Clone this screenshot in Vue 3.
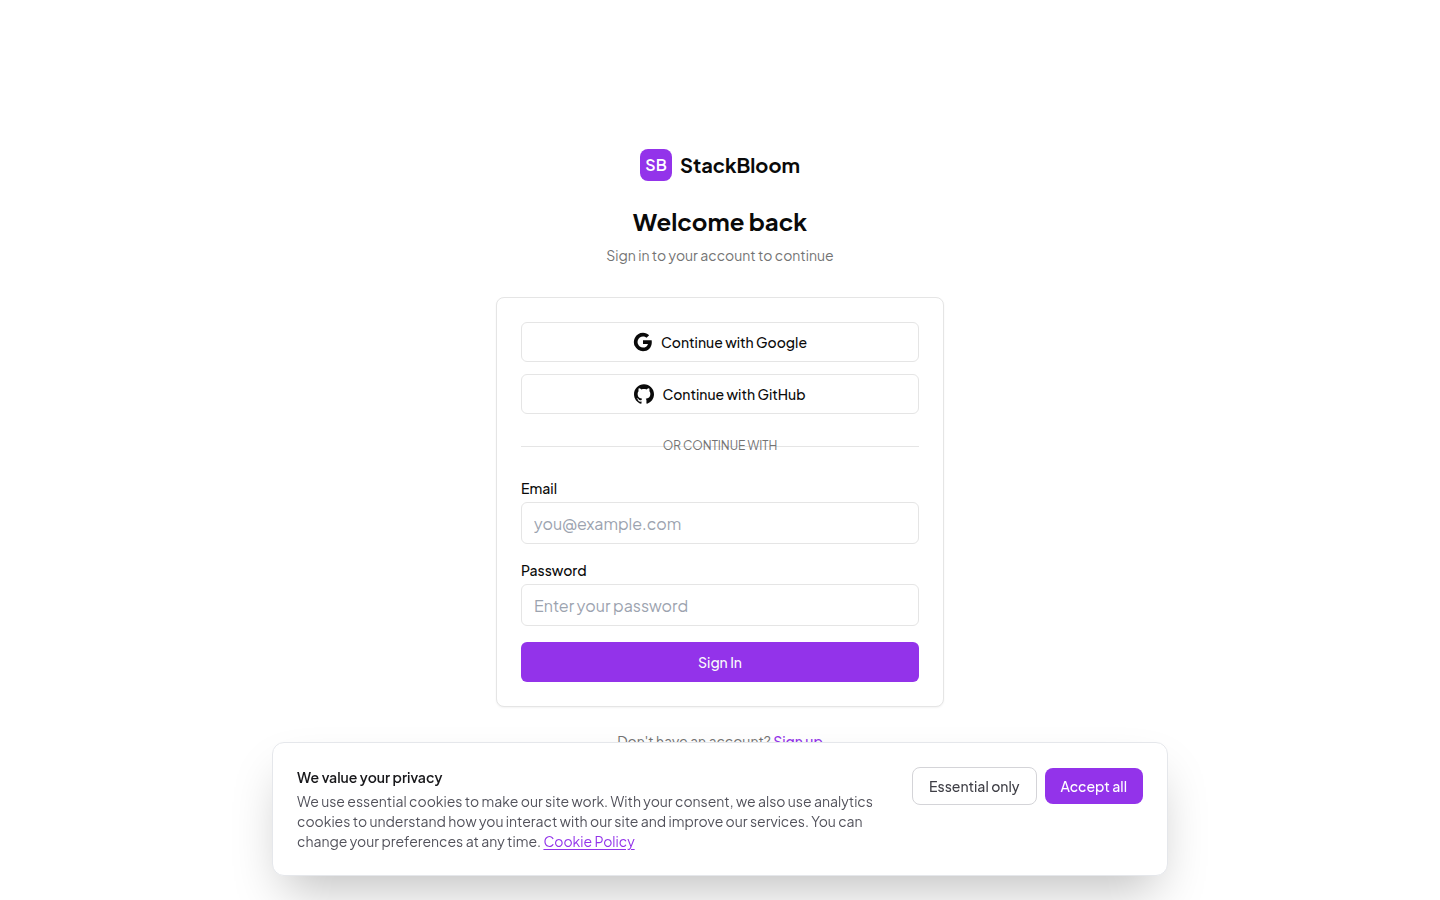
<script setup>
import { ref } from 'vue'

const email = ref('')
const password = ref('')
</script>

<template>
  <div class="page">
    <main class="auth">
      <header class="intro">
        <a class="brand" href="#">
          <span class="mark">SB</span>
          <span class="name">StackBloom</span>
        </a>
        <h1>Welcome back</h1>
        <p>Sign in to your account to continue</p>
      </header>

      <section class="card">
        <div class="providers">
          <button type="button" class="provider">
            <svg viewBox="0 0 24 24" aria-hidden="true">
              <path d="M22.56 12.25c0-.78-.07-1.53-.2-2.25H12v4.26h5.92c-.26 1.37-1.04 2.53-2.21 3.31v2.77h3.57c2.08-1.92 3.28-4.74 3.28-8.09z" />
              <path d="M12 23c2.97 0 5.46-.98 7.28-2.66l-3.57-2.77c-.98.66-2.23 1.06-3.71 1.06-2.86 0-5.29-1.93-6.16-4.53H2.18v2.84C3.99 20.53 7.7 23 12 23z" />
              <path d="M5.84 14.09c-.22-.66-.35-1.36-.35-2.09s.13-1.43.35-2.09V7.07H2.18C1.43 8.55 1 10.22 1 12s.43 3.45 1.18 4.93l2.85-2.22.81-.62z" />
              <path d="M12 5.38c1.62 0 3.06.56 4.21 1.64l3.15-3.15C17.45 2.09 14.97 1 12 1 7.7 1 3.99 3.47 2.18 7.07l3.66 2.84c.87-2.6 3.3-4.53 6.16-4.53z" />
            </svg>
            Continue with Google
          </button>
          <button type="button" class="provider">
            <svg viewBox="0 0 24 24" aria-hidden="true">
              <path d="M12 .297c-6.63 0-12 5.373-12 12 0 5.303 3.438 9.8 8.205 11.385.6.113.82-.258.82-.577 0-.285-.01-1.04-.015-2.04-3.338.724-4.042-1.61-4.042-1.61C4.422 18.07 3.633 17.7 3.633 17.7c-1.087-.744.084-.729.084-.729 1.205.084 1.838 1.236 1.838 1.236 1.07 1.835 2.809 1.305 3.495.998.108-.776.417-1.305.76-1.605-2.665-.3-5.466-1.332-5.466-5.93 0-1.31.465-2.38 1.235-3.22-.135-.303-.54-1.523.105-3.176 0 0 1.005-.322 3.3 1.23.96-.267 1.98-.399 3-.405 1.02.006 2.04.138 3 .405 2.28-1.552 3.285-1.23 3.285-1.23.645 1.653.24 2.873.12 3.176.765.84 1.23 1.91 1.23 3.22 0 4.61-2.805 5.625-5.475 5.92.42.36.81 1.096.81 2.22 0 1.606-.015 2.896-.015 3.286 0 .315.21.69.825.57C20.565 22.092 24 17.592 24 12.297c0-6.627-5.373-12-12-12" />
            </svg>
            Continue with GitHub
          </button>
        </div>

        <div class="divider"><span>OR CONTINUE WITH</span></div>

        <form @submit.prevent>
          <div class="field">
            <label for="email">Email</label>
            <input id="email" v-model="email" type="email" placeholder="you@example.com" />
          </div>
          <div class="field">
            <label for="password">Password</label>
            <input id="password" v-model="password" type="password" placeholder="Enter your password" />
          </div>
          <button type="submit" class="submit">Sign In</button>
        </form>
      </section>

      <p class="signup">Don't have an account? <a href="#">Sign up</a></p>
    </main>

    <aside class="consent" aria-labelledby="consent-title">
      <div class="consent-text">
        <h2 id="consent-title">We value your privacy</h2>
        <p>
          We use essential cookies to make our site work. With your consent, we also use analytics
          cookies to understand how you interact with our site and improve our services. You can
          change your preferences at any time. <a href="#">Cookie Policy</a>
        </p>
      </div>
      <div class="consent-actions">
        <button type="button" class="essential">Essential only</button>
        <button type="button" class="accept">Accept all</button>
      </div>
    </aside>
  </div>
</template>

<style>
body {
  margin: 0;
  background: #fff;
}
</style>

<style scoped>
* {
  box-sizing: border-box;
}

.page {
  min-height: 100vh;
  display: flex;
  align-items: center;
  justify-content: center;
  padding: 16px;
  color: #0a0a0a;
  font-family: "Plus Jakarta Sans", Inter, sans-serif;
  font-size: 14px;
  line-height: 20px;
  -webkit-font-smoothing: antialiased;
}

h1,
h2,
p {
  margin: 0;
}

button,
input {
  font-family: inherit;
}

button {
  font-size: 14px;
  line-height: 20px;
  font-weight: 500;
  cursor: pointer;
}

.auth {
  width: 100%;
  max-width: 448px;
}

.intro {
  display: flex;
  flex-direction: column;
  align-items: center;
  margin-bottom: 32px;
  text-align: center;
}

.brand {
  display: flex;
  align-items: center;
  gap: 8px;
  margin-bottom: 24px;
  color: inherit;
  text-decoration: none;
}

.mark {
  display: flex;
  align-items: center;
  justify-content: center;
  width: 32px;
  height: 32px;
  border-radius: 8px;
  background: #9333ea;
  color: #fff;
  font-size: 16px;
  font-weight: 600;
}

.name {
  font-size: 20px;
  line-height: 28px;
  font-weight: 700;
}

h1 {
  margin-bottom: 8px;
  font-size: 24px;
  line-height: 32px;
  font-weight: 700;
}

.intro p,
.signup {
  color: #737373;
}

.card {
  padding: 24px;
  border: 1px solid #e5e5e5;
  border-radius: 8px;
  background: #fff;
  box-shadow: 0 1px 2px rgba(0, 0, 0, 0.05);
}

.providers {
  display: grid;
  gap: 12px;
}

.provider {
  display: flex;
  align-items: center;
  justify-content: center;
  gap: 8px;
  height: 40px;
  border: 1px solid #e5e5e5;
  border-radius: 6px;
  background: #fff;
  color: inherit;
}

.provider svg {
  width: 20px;
  height: 20px;
  fill: currentColor;
}

.divider {
  display: grid;
  align-items: center;
  justify-items: center;
  margin: 24px 0;
}

.divider::before,
.divider span {
  grid-area: 1 / 1;
}

.divider::before {
  content: "";
  width: 100%;
  border-top: 1px solid #e5e5e5;
}

.divider span {
  color: #737373;
  font-size: 12px;
  line-height: 16px;
}

form {
  display: grid;
  gap: 16px;
}

.field {
  display: grid;
  gap: 4px;
}

label {
  font-weight: 500;
}

input {
  width: 100%;
  height: 42px;
  padding: 8px 12px;
  border: 1px solid #e5e5e5;
  border-radius: 6px;
  background: #fff;
  color: inherit;
  font-size: 16px;
  line-height: normal;
}

input::placeholder {
  color: #9ca3af;
}

.submit {
  height: 40px;
  border: 0;
  border-radius: 6px;
  background: #9333ea;
  color: #fafafa;
}

.signup {
  margin-top: 24px;
  text-align: center;
}

.signup a {
  color: #9333ea;
  font-weight: 500;
  text-decoration: none;
}

.consent {
  position: fixed;
  right: 16px;
  bottom: 24px;
  left: 16px;
  display: flex;
  align-items: flex-start;
  gap: 24px;
  max-width: 896px;
  margin: 0 auto;
  padding: 24px;
  border: 1px solid #e5e7eb;
  border-radius: 12px;
  background: #fff;
  box-shadow: 0 25px 50px -12px rgba(0, 0, 0, 0.25);
}

.consent-text {
  flex: 1;
}

h2 {
  margin-bottom: 4px;
  color: #18181b;
  font-size: 14px;
  line-height: 20px;
  font-weight: 600;
}

.consent p {
  color: #52525b;
}

.consent p a {
  color: #9333ea;
  text-decoration: underline;
  text-underline-offset: 2px;
}

.consent-actions {
  display: flex;
  align-items: center;
  gap: 8px;
}

.essential,
.accept {
  padding: 8px 16px;
  border: 0;
  border-radius: 8px;
  white-space: nowrap;
}

.essential {
  border: 1px solid #d4d4d8;
  background: #fff;
  color: #3f3f46;
}

.accept {
  background: #9333ea;
  color: #fff;
}
</style>
